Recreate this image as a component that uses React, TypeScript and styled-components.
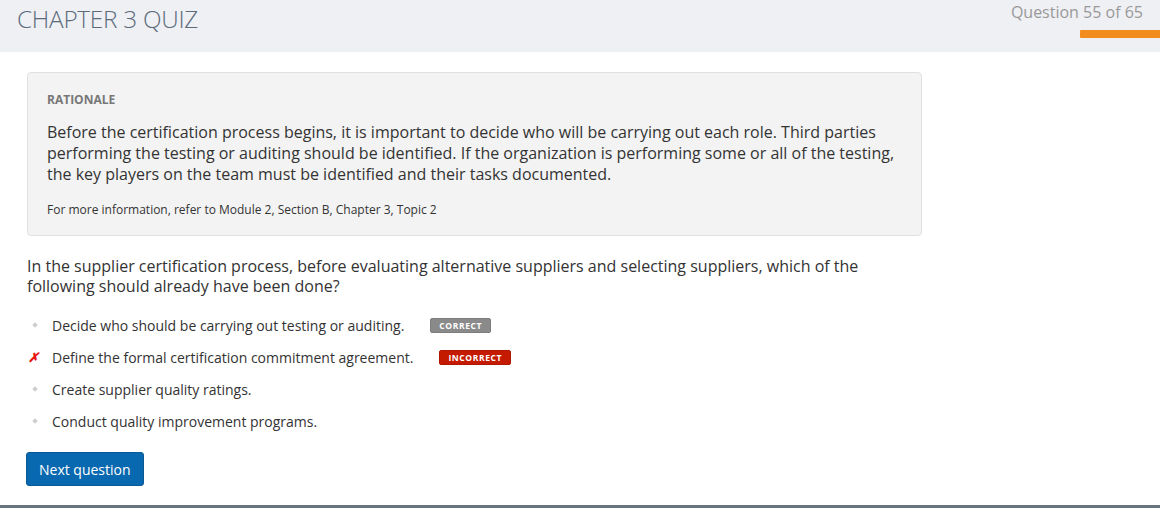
import React from "react";
import styled, { createGlobalStyle } from "styled-components";

const Global = createGlobalStyle`
  html, body { margin: 0; padding: 0; background: #fff; }
  body { font-family: "Open Sans", "Liberation Sans", sans-serif; width: 1160px; height: 508px; overflow: hidden; }
`;

const Page = styled.div`
  width: 1160px;
  height: 508px;
  display: flex;
  flex-direction: column;
  box-sizing: border-box;
  border-bottom: 3px solid #69747d;
`;

const Header = styled.header`
  height: 52px;
  background: #eff0f4;
  display: flex;
  justify-content: space-between;
  align-items: flex-start;
  padding-left: 17px;
  flex-shrink: 0;
`;

const Title = styled.h1`
  margin: 0;
  padding-top: 2px;
  font-weight: 300;
  font-size: 24.3px;
  line-height: 34px;
  color: #5b6b7b;
  letter-spacing: -0.25px;
`;

const Progress = styled.div`
  display: flex;
  flex-direction: column;
  align-items: flex-end;
`;

const Counter = styled.div`
  font-size: 16px;
  line-height: 22px;
  color: #999;
  padding-top: 1px;
  padding-right: 17px;
`;

const Bar = styled.div`
  margin-top: 7px;
  width: 80px;
  height: 8px;
  background: #f28c1f;
  border-radius: 1px 0 0 1px;
`;

const Main = styled.main`
  padding: 20px 0 0 27px;
  display: flex;
  flex-direction: column;
  align-items: flex-start;
`;

const Card = styled.section`
  width: 895px;
  box-sizing: border-box;
  background: #f3f3f3;
  border: 1px solid #e1e1e1;
  border-radius: 4px;
  padding: 18px 19px 17px;
`;

const Label = styled.div`
  font-size: 12px;
  font-weight: 700;
  color: #777;
  line-height: 17px;
`;

const Body = styled.p`
  margin: 14px 0 0;
  font-size: 16px;
  line-height: 21px;
  color: #333;
`;

const Small = styled.p`
  margin: 16px 0 0;
  font-size: 12px;
  line-height: 17px;
  color: #333;
`;

const Question = styled.p`
  margin: 20px 0 0;
  width: 860px;
  font-size: 16px;
  line-height: 20px;
  color: #333;
`;

const Options = styled.ul`
  list-style: none;
  margin: 13px 0 0;
  padding: 0;
`;

const Option = styled.li`
  display: flex;
  align-items: center;
  height: 32px;
  font-size: 14px;
  color: #333;
`;

const Marker = styled.span`
  width: 25px;
  display: flex;
  align-items: center;
  padding-left: 1px;
  box-sizing: border-box;
`;

const Dot = styled.span`
  display: block;
  width: 4px;
  height: 4px;
  margin-left: 5px;
  background: #d0d0d0;
  transform: rotate(45deg);
`;

const Cross = styled.span`
  color: #e8140f;
  font-weight: 700;
  font-size: 13px;
  font-style: italic;
  line-height: 14px;
`;

const Badge = styled.span<{ $tone: "gray" | "red" }>`
  display: inline-block;
  margin-left: 26px;
  padding: 0 8px;
  height: 13px;
  line-height: 13px;
  font-size: 8.5px;
  font-weight: 700;
  letter-spacing: 0.6px;
  color: #fff;
  border-radius: 2px;
  background: ${(p) => (p.$tone === "gray" ? "#8a8a8a" : "#c41a00")};
  border: 1px solid ${(p) => (p.$tone === "gray" ? "#7d7d7d" : "#b01700")};
`;

const Button = styled.button`
  margin-top: 15px;
  margin-left: -1px;
  height: 34px;
  padding: 0 12px;
  font-family: inherit;
  font-size: 14px;
  color: #fff;
  background: #0868b0;
  border: 1px solid #0a5896;
  border-radius: 3px;
  cursor: pointer;
`;

const options = [
  { text: "Decide who should be carrying out testing or auditing.", mark: "dot", badge: "gray" },
  { text: "Define the formal certification commitment agreement.", mark: "cross", badge: "red" },
  { text: "Create supplier quality ratings.", mark: "dot" },
  { text: "Conduct quality improvement programs.", mark: "dot" },
] as const;

export default function App() {
  return (
    <>
      <Global />
      <Page>
        <Header>
          <Title>CHAPTER 3 QUIZ</Title>
          <Progress>
            <Counter>Question 55 of 65</Counter>
            <Bar />
          </Progress>
        </Header>
        <Main>
          <Card>
            <Label>RATIONALE</Label>
            <Body>
              Before the certification process begins, it is important to decide who will be carrying out each role. Third parties
              performing the testing or auditing should be identified. If the organization is performing some or all of the testing,
              the key players on the team must be identified and their tasks documented.
            </Body>
            <Small>For more information, refer to Module 2, Section B, Chapter 3, Topic 2</Small>
          </Card>
          <Question>
            In the supplier certification process, before evaluating alternative suppliers and selecting suppliers, which of the
            following should already have been done?
          </Question>
          <Options>
            {options.map((o) => (
              <Option key={o.text}>
                <Marker>{o.mark === "cross" ? <Cross>✗</Cross> : <Dot />}</Marker>
                <span>{o.text}</span>
                {"badge" in o && o.badge === "gray" && <Badge $tone="gray">CORRECT</Badge>}
                {"badge" in o && o.badge === "red" && <Badge $tone="red">INCORRECT</Badge>}
              </Option>
            ))}
          </Options>
          <Button>Next question</Button>
        </Main>
      </Page>
    </>
  );
}
